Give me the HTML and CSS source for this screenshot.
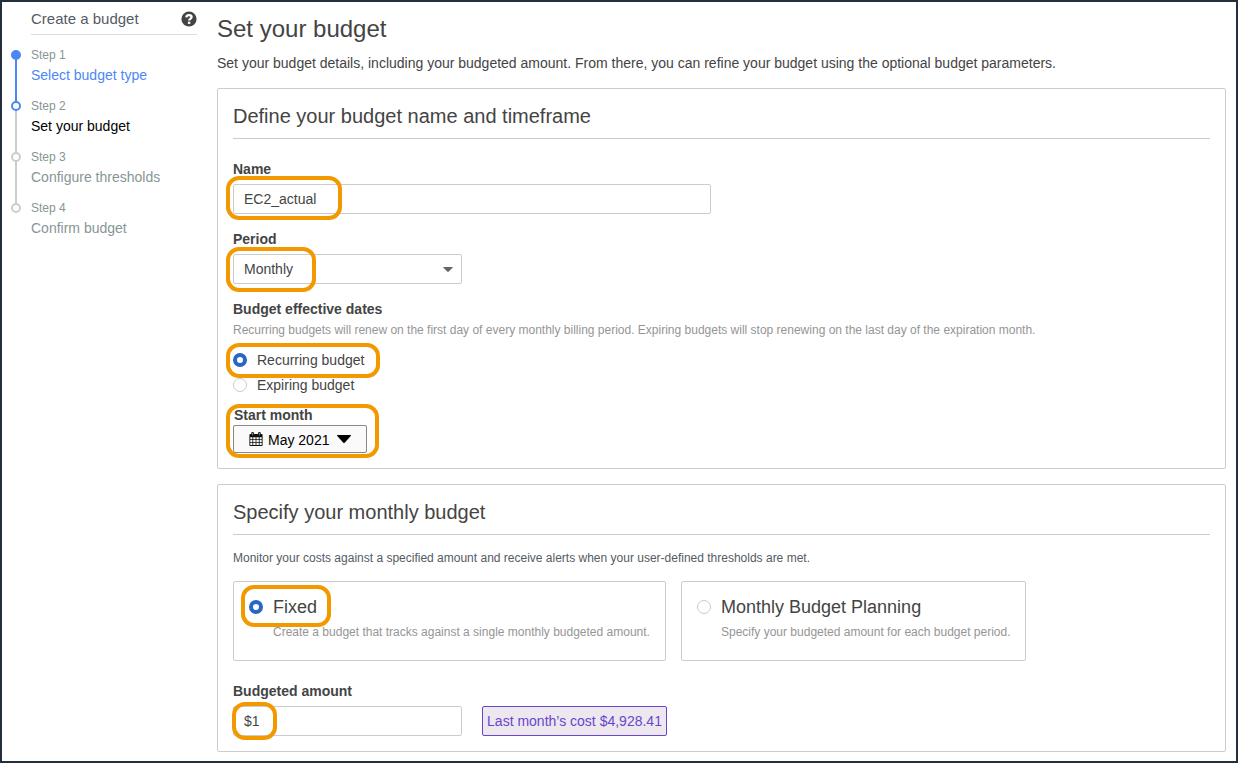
FILE: index.html
```html
<!DOCTYPE html>
<html lang="en">
<head>
<meta charset="utf-8">
<title>Set your budget</title>
<link rel="stylesheet" href="styles.css">
</head>
<body>
<div class="page">
  <nav class="sidebar">
    <div class="sidebar-head">
      <span>Create a budget</span>
      <svg class="help-icon" width="16" height="16" viewBox="0 0 16 16">
        <circle cx="8" cy="8" r="7.6" fill="#444"/>
        <path d="M5.300 6.300C5.500 4.700 6.600 4.100 8 4.100c1.600 0 2.600.8 2.600 2 0 1.800-2.500 1.800-2.500 3.500" fill="none" stroke="#fff" stroke-width="2.300"/>
        <rect x="6.900" y="10.700" width="2.400" height="2.200" fill="#fff"/>
      </svg>
    </div>
    <ol class="steps">
      <li class="step done"><span class="dot"></span><span class="step-no">Step 1</span><a class="step-name">Select budget type</a></li>
      <li class="step current"><span class="dot"></span><span class="step-no">Step 2</span><span class="step-name">Set your budget</span></li>
      <li class="step"><span class="dot"></span><span class="step-no">Step 3</span><span class="step-name">Configure thresholds</span></li>
      <li class="step"><span class="dot"></span><span class="step-no">Step 4</span><span class="step-name">Confirm budget</span></li>
    </ol>
  </nav>
  <main class="main">
    <h1>Set your budget</h1>
    <p class="intro">Set your budget details, including your budgeted amount. From there, you can refine your budget using the optional budget parameters.</p>

    <section class="card card-define">
      <h2>Define your budget name and timeframe</h2>
      <div class="field">
        <div class="label">Name</div>
        <div class="input name-input">EC2_actual<span class="mark mark-name"></span></div>
      </div>
      <div class="field">
        <div class="label">Period</div>
        <div class="input select">Monthly
          <svg width="10" height="5" viewBox="0 0 10 5"><path d="M.5 0h9q.5 0 .2.500L5.800 4.600q-.8.700-1.600 0L.300.500Q0 0 .5 0z" fill="#666"/></svg>
          <span class="mark mark-period"></span>
        </div>
      </div>
      <div class="label">Budget effective dates</div>
      <p class="hint">Recurring budgets will renew on the first day of every monthly billing period. Expiring budgets will stop renewing on the last day of the expiration month.</p>
      <div class="radio-row"><span class="radio checked"></span>Recurring budget<span class="mark mark-recurring"></span></div>
      <div class="radio-row"><span class="radio"></span>Expiring budget</div>
      <div class="start">
        <div class="label start-label">Start month</div>
        <div class="month-button">
          <svg width="14" height="14" viewBox="0 0 14 14">
            <rect x=".4" y="2" width="13.200" height="12" rx="1" fill="#111"/>
            <rect x="2.300" y="0" width="2.600" height="4" rx="1" fill="#111"/>
            <rect x="9.100" y="0" width="2.600" height="4" rx="1" fill="#111"/>
            <path d="M3.600 .8v2.400M10.400 .8v2.400" stroke="#aaa" stroke-width=".8"/>
            <path d="M1.300 5.200h2.100v2.100H1.300zM4.200 5.200h2.400v2.100H4.200zM7.400 5.200h2.400v2.100H7.400zM10.600 5.200h2.100v2.100h-2.100zM1.300 8.100h2.100v2.100H1.300zM4.200 8.100h2.400v2.100H4.200zM7.400 8.100h2.400v2.100H7.400zM10.600 8.100h2.100v2.100h-2.100zM1.300 11h2.100v2.100H1.300zM4.200 11h2.400v2.100H4.200zM7.400 11h2.400v2.100H7.400zM10.600 11h2.100v2.100h-2.100z" fill="#fafafa"/>
          </svg>
          <span>May 2021</span>
          <svg class="caret" width="14" height="8" viewBox="0 0 14 8"><path d="M.3 0h13.400q.5.300 0 .9L7.700 7.700q-.7.600-1.400 0L.3.900Q-.2.300.3 0z" fill="#000"/></svg>
        </div>
        <span class="mark mark-start"></span>
      </div>
    </section>

    <section class="card card-specify">
      <h2>Specify your monthly budget</h2>
      <p class="note">Monitor your costs against a specified amount and receive alerts when your user-defined thresholds are met.</p>
      <div class="options">
        <div class="option option-fixed">
          <div class="option-title"><span class="radio checked"></span>Fixed<span class="mark mark-fixed"></span></div>
          <p>Create a budget that tracks against a single monthly budgeted amount.</p>
        </div>
        <div class="option option-planning">
          <div class="option-title"><span class="radio"></span>Monthly Budget Planning</div>
          <p>Specify your budgeted amount for each budget period.</p>
        </div>
      </div>
      <div class="label">Budgeted amount</div>
      <div class="amount-row">
        <div class="input">$1<span class="mark mark-amount"></span></div>
        <div class="last-cost">Last month’s cost $4,928.41</div>
      </div>
    </section>
  </main>
</div>
</body>
</html>
```
FILE: styles.css
```css
* { box-sizing: border-box; }
body { margin: 0; font: 14px/20px "Liberation Sans", Arial, sans-serif; color: #444; }
h1, h2, p, ol { margin: 0; padding: 0; font-weight: normal; }
.page { display: flex; width: 1238px; height: 763px; border: 2px solid #232f3e; background: #fff; overflow: hidden; white-space: nowrap; }

.sidebar { width: 215px; padding-left: 8px; }
.sidebar-head { display: flex; align-items: center; justify-content: space-between; margin-left: 21px; width: 166px; height: 33px; border-bottom: 1px solid #ddd; font-size: 15px; color: #545b64; }
.sidebar-head span { padding-top: 1px; }
.help-icon { margin-top: 2px; }
.steps { list-style: none; padding-top: 10px; }
.step { position: relative; display: flex; flex-direction: column; height: 51px; padding-left: 21px; color: #879596; }
.step-no { font-size: 12px; line-height: 20px; }
.step-name { line-height: 21px; }
.done .step-name { color: #4d87f6; }
.current .step-name { color: #000; }
.step:not(:last-child)::before { content: ""; position: absolute; left: 5px; top: 10px; width: 2px; height: 51px; background: #ccc; }
.step.done::before { background: #4d87f6; }
.dot { position: absolute; left: 1px; top: 5px; width: 10px; height: 10px; border: 2px solid #ccc; border-radius: 50%; background: #fff; }
.done .dot { border-color: #4d87f6; background: #4d87f6; }
.current .dot { border-color: #4d87f6; }

.main { width: 1009px; }
h1 { padding-top: 11px; font-size: 24px; line-height: 32px; }
.intro { padding-top: 8px; height: 43px; }
.card { border: 1px solid #ccc; border-radius: 2px; padding: 0 15px; }
.card-define { height: 381px; margin-bottom: 15px; }
.card-specify { height: 268px; }
h2 { height: 50px; padding-top: 15px; font-size: 20px; line-height: 24px; border-bottom: 1px solid #ccc; margin-bottom: 20px; }
.label { height: 20px; font-weight: bold; }
.field { margin-bottom: 15px; }
.field .label { height: 25px; }
.input { position: relative; width: 229px; height: 30px; padding: 0 10px; border: 1px solid #ccc; border-radius: 2px; line-height: 28px; }
.name-input { width: 478px; }
.select { display: flex; align-items: center; justify-content: space-between; padding-right: 8px; }
.select svg { margin-top: 1px; }
.hint { padding-top: 1px; font-size: 12px; line-height: 20px; color: #959595; margin-bottom: 7px; }
.radio-row { position: relative; display: flex; align-items: center; gap: 10px; height: 25px; }
.radio { width: 14px; height: 14px; flex: none; border: 1px solid #ccc; border-radius: 50%; background: #fff; }
.radio.checked { border: 4px solid #2a67c0; }
.start { position: relative; padding-top: 8px; }
.start-label { padding-left: 1px; }
.month-button { display: flex; align-items: center; width: 134px; height: 28px; padding-left: 15px; border: 1px solid #888; border-radius: 2px; background: #fafafa; color: #000; }
.month-button span { padding: 2px 8px 0 5px; }

.card-specify h2 { margin-bottom: 13px; }
.note { font-size: 12px; line-height: 20px; height: 33px; color: #545b64; }
.options { display: flex; gap: 15px; margin-bottom: 20px; }
.option { height: 80px; padding: 12px 15px 0; border: 1px solid #ccc; border-radius: 2px; }
.option-fixed { width: 433px; }
.option-planning { width: 345px; }
.option-title { position: relative; display: flex; align-items: center; gap: 10px; height: 25px; font-size: 18px; }
.option p { padding: 1px 0 0 24px; font-size: 12px; line-height: 24px; color: #959595; }
.card-specify .label { height: 25px; }
.amount-row { display: flex; gap: 20px; }
.last-cost { width: 185px; height: 30px; border: 1px solid #6a45cc; border-radius: 2px; background: #ede7f0; color: #6a45cc; line-height: 28px; text-align: center; }

/* Orange callouts drawn over the fields */
.mark { position: absolute; border: 4px solid #f29900; border-radius: 13px; pointer-events: none; }
.mark-name { left: -8px; top: -9px; width: 116px; height: 44px; }
.mark-period { left: -8px; top: -8px; width: 90px; height: 45px; }
.mark-recurring { left: -7px; top: -4px; width: 154px; height: 35px; }
.mark-start { left: -7px; top: 7px; width: 153px; height: 54px; }
.mark-fixed { left: -8px; top: -9px; width: 90px; height: 42px; }
.mark-amount { left: -2px; top: -5px; width: 45px; height: 38px; }
```
